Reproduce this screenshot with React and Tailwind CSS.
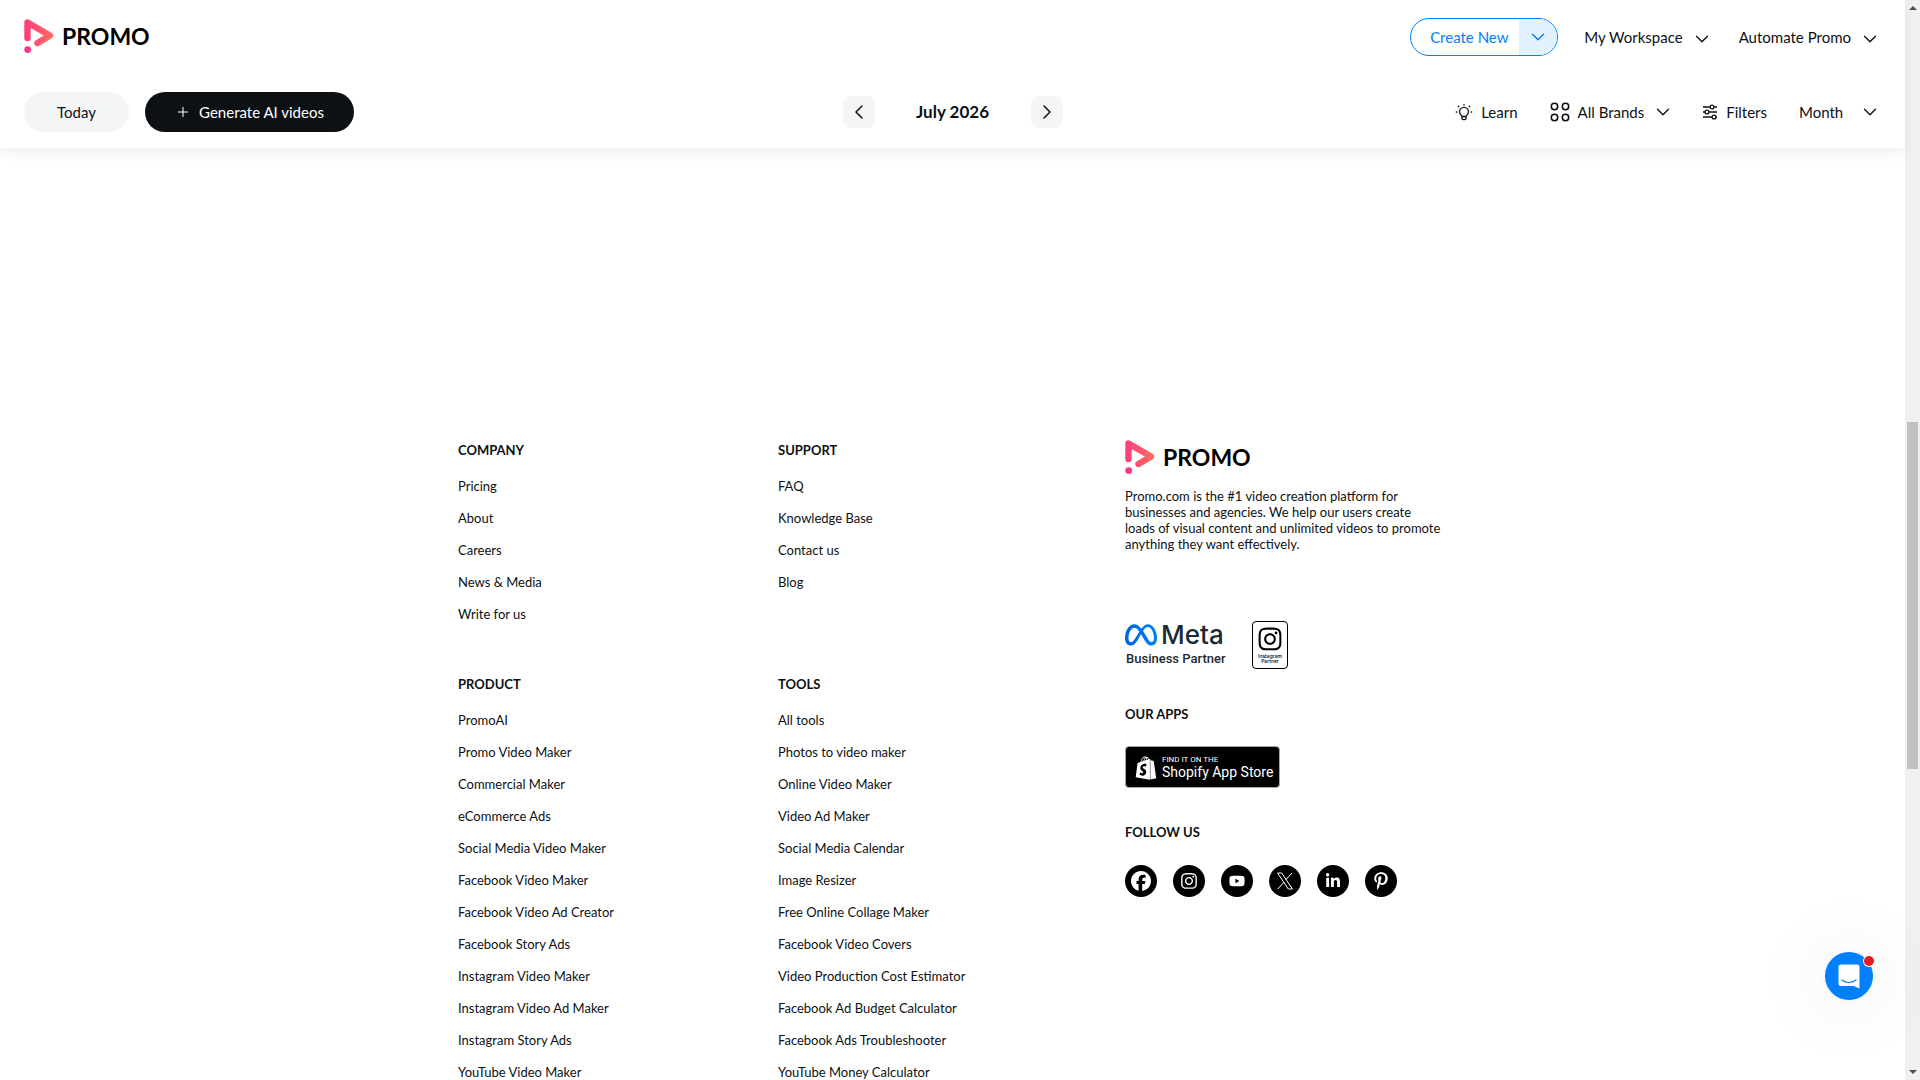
import React from 'react';
import { ChevronDown, ChevronLeft, ChevronRight, Plus } from 'lucide-react';
import { FaFacebook, FaInstagram, FaLinkedinIn, FaMeta, FaPinterestP, FaShopify, FaYoutube } from 'react-icons/fa6';

const company = ['Pricing', 'About', 'Careers', 'News & Media', 'Write for us'];

const support = ['FAQ', 'Knowledge Base', 'Contact us', 'Blog'];

const product = [
  'PromoAI',
  'Promo Video Maker',
  'Commercial Maker',
  'eCommerce Ads',
  'Social Media Video Maker',
  'Facebook Video Maker',
  'Facebook Video Ad Creator',
  'Facebook Story Ads',
  'Instagram Video Maker',
  'Instagram Video Ad Maker',
  'Instagram Story Ads',
  'YouTube Video Maker',
];

const tools = [
  'All tools',
  'Photos to video maker',
  'Online Video Maker',
  'Video Ad Maker',
  'Social Media Calendar',
  'Image Resizer',
  'Free Online Collage Maker',
  'Facebook Video Covers',
  'Video Production Cost Estimator',
  'Facebook Ad Budget Calculator',
  'Facebook Ads Troubleshooter',
  'YouTube Money Calculator',
];

const socials = [
  { name: 'Facebook', icon: FaFacebook, size: 'size-5' },
  { name: 'Instagram', icon: FaInstagram, size: 'size-[18px]' },
  { name: 'YouTube', icon: FaYoutube, size: 'size-4' },
  { name: 'X', icon: XIcon, size: 'size-[18px]' },
  { name: 'LinkedIn', icon: FaLinkedinIn, size: 'size-4' },
  { name: 'Pinterest', icon: FaPinterestP, size: 'size-[18px]' },
];

function XIcon({ className }) {
  return (
    <svg viewBox="0 0 18 18" className={className} fill="none" stroke="currentColor" aria-hidden="true">
      <path d="M1.500 1h4.200l10.800 16h-4.200z" />
      <path d="M16 1l-6.400 7M8.200 10L1.800 17" />
    </svg>
  );
}

function Logo({ id }) {
  return (
    <a href="#" className="flex w-fit items-center gap-2 text-black">
      <svg viewBox="0 0 30 34" className="h-[34px] w-[30px]" fill="none" aria-hidden="true">
        <defs>
          <linearGradient id={id} x1="0" y1="0" x2="30" y2="0" gradientUnits="userSpaceOnUse">
            <stop stopColor="#ff3c7b" />
            <stop offset="1" stopColor="#ff6e61" />
          </linearGradient>
        </defs>
        <path
          d="M3.5 19V3.5L26 16.5L13.5 24"
          stroke={`url(#${id})`}
          strokeWidth="6.4"
          strokeLinecap="round"
          strokeLinejoin="round"
        />
        <circle cx="3.7" cy="30.6" r="3.4" fill="#ff3385" />
      </svg>
      <span className="text-[23px] leading-8 font-bold">PROMO</span>
    </a>
  );
}

function MenuButton({ children }) {
  return (
    <button type="button" aria-haspopup="menu" className="flex items-center gap-2">
      {children}
      <ChevronDown className="mt-1 size-[22px]" strokeWidth={1.5} />
    </button>
  );
}

function BulbIcon() {
  return (
    <svg viewBox="0 0 18 18" className="size-[18px]" fill="none" stroke="currentColor" strokeWidth="1.3" aria-hidden="true">
      <path d="M7 13.500c0-1.200-2.500-2-2.500-4.700a4.500 4.500 0 0 1 9 0c0 2.700-2.500 3.500-2.500 4.700z" />
      <path d="M7 13.500v1.700c0 .9.600 1.500 1.300 1.500h1.400c.7 0 1.300-.6 1.300-1.500v-1.700" />
      <path d="M9 1v1.400M0.800 9h1.400M15.800 9h1.400M2.800 2.800l1.200 1.200M15.200 2.800L14 4" />
    </svg>
  );
}

function BrandsIcon() {
  return (
    <svg viewBox="0 0 20 20" className="size-5" fill="none" stroke="currentColor" strokeWidth="1.6" aria-hidden="true">
      <circle cx="4.5" cy="4.5" r="3.2" />
      <circle cx="15.5" cy="4.5" r="3.2" />
      <circle cx="4.5" cy="15.5" r="3.2" />
      <circle cx="15.5" cy="15.5" r="3.2" />
    </svg>
  );
}

function FiltersIcon() {
  return (
    <svg viewBox="0 0 16 16" className="size-4" fill="none" stroke="currentColor" strokeWidth="1.3" aria-hidden="true">
      <path d="M1 3h7M12 3h3M1 8h2M7 8h8M1 13h9M14 13h1" />
      <circle cx="10" cy="3" r="1.9" />
      <circle cx="5" cy="8" r="1.9" />
      <circle cx="12" cy="13" r="1.9" />
    </svg>
  );
}

function TopBar() {
  return (
    <div className="flex h-[72px] items-center justify-between px-6">
      <Logo id="logo-header" />
      <div className="flex items-center gap-[26px] pt-0.5">
        <div className="flex h-[38px] overflow-hidden rounded-full border border-[#007fff] text-[#007fff]">
          <button type="button" className="w-[108px] pl-2">Create New</button>
          <button type="button" aria-label="More create options" className="flex w-[38px] items-center justify-center bg-[#e2f1ff]">
            <ChevronDown className="size-[22px]" strokeWidth={1.5} />
          </button>
        </div>
        <MenuButton>My Workspace</MenuButton>
        <MenuButton>Automate Promo</MenuButton>
      </div>
    </div>
  );
}

function CalendarBar() {
  return (
    <div className="grid h-[76px] grid-cols-[1fr_auto_1fr] items-center px-6 pt-1">
      <div className="flex gap-4">
        <button type="button" className="h-10 w-[105px] rounded-full bg-[#f4f5f7]">Today</button>
        <button type="button" className="flex h-10 w-[209px] items-center justify-center gap-2 rounded-full bg-[#0d1114] text-white">
          <Plus className="size-4" strokeWidth={1.5} />
          Generate AI videos
        </button>
      </div>
      <div className="flex items-center">
        <button type="button" aria-label="Previous month" className="flex size-8 items-center justify-center rounded-lg bg-[#f4f5f7]">
          <ChevronLeft className="size-6" strokeWidth={1.5} />
        </button>
        <h1 className="w-[156px] text-center text-[17px] font-bold">July 2026</h1>
        <button type="button" aria-label="Next month" className="flex size-8 items-center justify-center rounded-lg bg-[#f4f5f7]">
          <ChevronRight className="size-6" strokeWidth={1.5} />
        </button>
      </div>
      <div className="flex items-center justify-end gap-7">
        <button type="button" className="mr-1 flex items-center gap-2">
          <BulbIcon />
          Learn
        </button>
        <button type="button" aria-haspopup="menu" className="flex items-center gap-2">
          <BrandsIcon />
          All Brands
          <ChevronDown className="size-[22px]" strokeWidth={1.5} />
        </button>
        <button type="button" className="flex items-center gap-2">
          <FiltersIcon />
          Filters
        </button>
        <div className="grid w-[86px] items-center">
          <select aria-label="Calendar view" className="col-start-1 row-start-1 appearance-none bg-transparent pl-1">
            <option>Month</option>
            <option>Week</option>
          </select>
          <ChevronDown className="pointer-events-none col-start-1 row-start-1 size-[22px] justify-self-end" strokeWidth={1.5} />
        </div>
      </div>
    </div>
  );
}

function LinkList({ title, links }) {
  return (
    <nav aria-label={title}>
      <h2 className="mb-2.5 leading-5 font-bold">{title}</h2>
      <ul>
        {links.map((link) => (
          <li key={link} className="leading-8">
            <a href="#">{link}</a>
          </li>
        ))}
      </ul>
    </nav>
  );
}

function Partners() {
  return (
    <div className="mt-[69px] flex h-12 items-center gap-6">
      <div className="flex w-[103px] flex-col font-[Roboto,sans-serif] text-[#1c2b33]">
        <svg className="absolute size-0" aria-hidden="true">
          <linearGradient id="meta-blue" x1="0" x2="1">
            <stop stopColor="#0064e0" />
            <stop offset="1" stopColor="#0082fb" />
          </linearGradient>
        </svg>
        <div className="flex items-center gap-1">
          <FaMeta className="h-[26px] w-8 shrink-0" style={{ fill: 'url(#meta-blue)' }} />
          <span className="font-[Inter,sans-serif] text-[26px] leading-7 font-medium">Meta</span>
        </div>
        <span className="pl-px text-[13px] leading-5 font-medium">Business Partner</span>
      </div>
      <div className="flex h-12 w-9 flex-col items-center rounded-sm border border-black pt-1 text-black">
        <FaInstagram className="size-[26px]" />
        <span className="mt-0.5 text-center font-[Inter,sans-serif] text-[5px] leading-[5px] font-medium">
          Instagram
          <br />
          Partner
        </span>
      </div>
    </div>
  );
}

function Footer() {
  return (
    <footer className="mx-auto flex w-full max-w-[989px] justify-between pt-[292px] text-[13px]">
      <div className="grid grid-cols-[320px_auto] gap-y-11">
        <LinkList title="COMPANY" links={company} />
        <LinkList title="SUPPORT" links={support} />
        <LinkList title="PRODUCT" links={product} />
        <LinkList title="TOOLS" links={tools} />
      </div>
      <div className="w-[322px]">
        <Logo id="logo-footer" />
        <p className="mt-3.5 max-w-[318px] leading-4">
          Promo.com is the #1 video creation platform for businesses and agencies. We help our users create loads of
          visual content and unlimited videos to promote anything they want effectively.
        </p>
        <Partners />
        <h2 className="mt-[35px] leading-5 font-bold">OUR APPS</h2>
        <a href="#" className="mt-[22px] flex h-[42px] w-[155px] items-center gap-1 rounded-sm border border-[#a6a6a6] bg-black pt-px pl-2 text-white">
          <FaShopify className="size-6" />
          <span className="flex flex-col font-[Roboto,sans-serif]">
            <span className="text-[8px] leading-2">FIND IT ON THE</span>
            <span className="text-sm leading-4">Shopify App Store</span>
          </span>
        </a>
        <h2 className="mt-[34px] leading-5 font-bold">FOLLOW US</h2>
        <div className="mt-[23px] flex gap-4">
          {socials.map(({ name, icon: Icon, size }) => (
            <a key={name} href="#" aria-label={name} className="flex size-8 items-center justify-center rounded-full bg-black text-white">
              <Icon className={size} />
            </a>
          ))}
        </div>
      </div>
    </footer>
  );
}

function Scrollbar() {
  return (
    <div className="flex w-[15px] shrink-0 flex-col items-center bg-[#f0f0f0] py-1.5" aria-hidden="true">
      <span className="border-x-4 border-b-4 border-x-transparent border-b-[#505050]" />
      <span className="mt-[412px] mb-auto h-[347px] w-[11px] bg-[#c1c1c1]" />
      <span className="border-x-4 border-t-4 border-x-transparent border-t-[#505050]" />
    </div>
  );
}

function ChatButton() {
  return (
    <button
      type="button"
      aria-label="Open chat"
      className="fixed right-[47px] bottom-20 flex size-12 items-center justify-center rounded-full bg-[#007fff] text-white shadow-[0_1px_6px_rgba(0,0,0,0.06),0_2px_80px_rgba(0,0,0,0.12)]"
    >
      <svg viewBox="0 0 22 25" className="h-[25px] w-[22px]" aria-hidden="true">
        <path d="M3 0.5h16a2.5 2.5 0 0 1 2.5 2.5v21.5l-6-2.5H3A2.5 2.5 0 0 1 .5 19.5V3A2.5 2.5 0 0 1 3 .5z" fill="currentColor" />
        <path d="M4 16c4 3.3 10 3.3 14 0" fill="none" stroke="#007fff" strokeWidth="1.2" strokeLinecap="round" />
      </svg>
      <span className="absolute top-1 -right-px size-2.5 rounded-full bg-[#e32020] ring-1 ring-white" />
    </button>
  );
}

export default function App() {
  return (
    <div className="flex h-screen overflow-hidden bg-white font-[Lato,sans-serif] text-[#0d1114]">
      <div className="min-w-0 flex-1">
        <header className="relative text-[15px] shadow-[0_4px_12px_rgba(0,0,0,0.07)]">
          <TopBar />
          <CalendarBar />
        </header>
        <Footer />
      </div>
      <Scrollbar />
      <ChatButton />
    </div>
  );
}
